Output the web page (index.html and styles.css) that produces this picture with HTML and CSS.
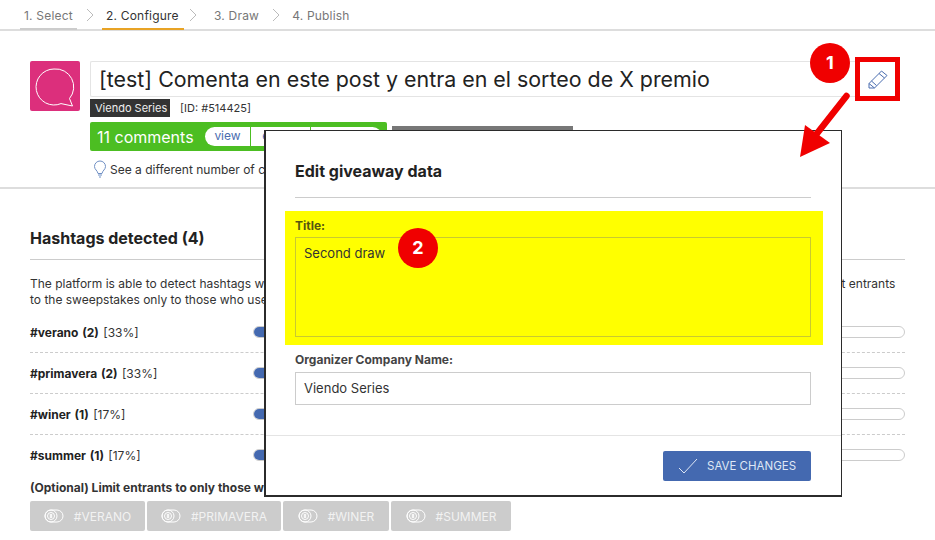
FILE: index.html
```html
<!DOCTYPE html>
<html>
<head>
	<meta charset="utf-8">
	<title>Configure giveaway</title>
	<link rel="stylesheet" href="styles.css">
</head>
<body>
	<nav class="steps">
		<a class="step done">1. Select</a>
		<svg class="chev" width="8" height="14" viewBox="0 0 8 14"><path d="M1 1l6 6-6 6"/></svg>
		<a class="step active">2. Configure</a>
		<svg class="chev c2" width="8" height="14" viewBox="0 0 8 14"><path d="M1 1l6 6-6 6"/></svg>
		<a class="step">3. Draw</a>
		<svg class="chev c3" width="8" height="14" viewBox="0 0 8 14"><path d="M1 1l6 6-6 6"/></svg>
		<a class="step">4. Publish</a>
	</nav>

	<header class="head">
		<div class="logo">
			<svg width="50" height="50" viewBox="0 0 50 50"><path d="M24 8a18 18 0 1 0 7 34.600l11.500 2.400-3-7.500A18 18 0 0 0 24 8z"/></svg>
		</div>
		<div class="head-main">
			<div class="title-row">
				<div class="title-box">[test] Comenta en este post y entra en el sorteo de X premio</div>
				<div class="edit-box">
					<svg width="24" height="24" viewBox="0 0 24 24"><path d="M3 16.500L15.500 4l5.500 4.500L8.500 21H3z M3 16.500l5.500 4.500 M5.500 14l5 4.500 M13 6.500l5.500 4.500"/></svg>
				</div>
			</div>
			<div class="meta"><span class="tag">Viendo Series</span><span class="id">[ID: #514425]</span></div>
			<div class="count-row">
				<div class="count">
					<span class="count-num">11 comments</span>
					<div class="pill"><a class="pill-view">view</a><a class="pill-export">export</a><a>refresh</a></div>
				</div>
				<div class="grey-btn"></div>
			</div>
			<p class="hint">
				<svg width="14" height="18" viewBox="0 0 14 18"><path d="M5 13.500C4.500 10.500 1.500 9.500 1.500 6.500a5.500 5.500 0 0 1 11 0c0 3-3 4-3.500 7z M5 15h4 M6 17h2"/></svg>
				See a different number of comments than on the post?
			</p>
		</div>
	</header>

	<section class="tags">
		<h2>Hashtags detected (4)</h2>
		<p class="intro">The platform is able to detect hashtags within the comments of your post and count these automatically for you. You can use this feature to limit entrants<br>to the sweepstakes only to those who used a specific hashtag.</p>
		<div class="tag-row"><span class="tag-name"><b>#verano (2)</b> [33%]</span><div class="bar"><i style="width: 33%"></i></div></div>
		<div class="tag-row"><span class="tag-name"><b>#primavera (2)</b> [33%]</span><div class="bar"><i style="width: 33%"></i></div></div>
		<div class="tag-row"><span class="tag-name"><b>#winer (1)</b> [17%]</span><div class="bar"><i style="width: 17%"></i></div></div>
		<div class="tag-row last"><span class="tag-name"><b>#summer (1)</b> [17%]</span><div class="bar"><i style="width: 17%"></i></div></div>
		<h4>(Optional) Limit entrants to only those who used these hashtags:</h4>
		<div class="filters">
			<a class="filter f1"><svg width="20" height="14" viewBox="0 0 20 14"><rect x="1" y="1" width="18" height="12" rx="6"/><circle cx="7" cy="7" r="6"/><circle cx="7" cy="7" r="3.500"/><path d="M6.300 5v4M7.700 5v4"/></svg>#VERANO</a>
			<a class="filter f2"><svg width="20" height="14" viewBox="0 0 20 14"><rect x="1" y="1" width="18" height="12" rx="6"/><circle cx="7" cy="7" r="6"/><circle cx="7" cy="7" r="3.500"/><path d="M6.300 5v4M7.700 5v4"/></svg>#PRIMAVERA</a>
			<a class="filter f3"><svg width="20" height="14" viewBox="0 0 20 14"><rect x="1" y="1" width="18" height="12" rx="6"/><circle cx="7" cy="7" r="6"/><circle cx="7" cy="7" r="3.500"/><path d="M6.300 5v4M7.700 5v4"/></svg>#WINER</a>
			<a class="filter f4"><svg width="20" height="14" viewBox="0 0 20 14"><rect x="1" y="1" width="18" height="12" rx="6"/><circle cx="7" cy="7" r="6"/><circle cx="7" cy="7" r="3.500"/><path d="M6.300 5v4M7.700 5v4"/></svg>#SUMMER</a>
		</div>
	</section>

	<div class="modal">
		<div class="modal-body">
			<h3>Edit giveaway data</h3>
			<div class="field hilite">
				<label>Title:</label>
				<div class="textarea"><span>Second draw</span></div>
			</div>
			<div class="field">
				<label>Organizer Company Name:</label>
				<div class="input">Viendo Series</div>
			</div>
		</div>
		<div class="modal-foot">
			<a class="save">
				<svg width="20" height="16" viewBox="0 0 20 16"><path d="M1 10l5 5L19 1"/></svg>
				SAVE CHANGES
			</a>
		</div>
	</div>

	<!-- annotations on top of the screenshot -->
	<div class="badge b1">1</div>
	<div class="badge b2">2</div>
	<svg class="arrow" width="60" height="72" viewBox="0 0 60 72">
		<path class="shaft" d="M46.500 6L15 46"/>
		<path class="head-tip" d="M0 67L5 35 30 53z"/>
	</svg>
</body>
</html>
```

FILE: styles.css
```css
html{height: 100%; background: #fff;}
body{margin: 0; height: 540px; overflow: hidden; position: relative; font-family: Inter, "Liberation Sans", sans-serif; font-size: 12px; color: #333;}
a{display: block;}

/* steps */
.steps{display: flex; align-items: center; height: 29px; padding-left: 20px; border-bottom: 2px solid #ddd; color: #777;}
.step{height: 27px; line-height: 29px; padding: 0 4px; border-bottom: 2px solid transparent; font-size: 12px; letter-spacing: .2px; margin-bottom: -2px;}
.step.done{border-bottom-color: #ccc; width: 49px;}
.step.active{border-bottom-color: #e8a325; color: #333; width: 74px;}
.chev{fill: none; stroke: #bbb; stroke-width: 1; margin: 0 8px 0 9px;}
.chev.c2{margin: 0 13px 0 5px;}
.chev.c3{margin: 0 8px 0 9px;}

/* header */
.head{display: flex; gap: 10px; padding: 30px 35px 0 30px; height: 158px; box-sizing: border-box; border-bottom: 2px solid #ddd;}
.logo{flex: none; width: 50px; height: 50px; background: #dc2f7c; border-radius: 2px;}
.logo svg{display: block; fill: none; stroke: #fff; stroke-width: 1;}
.head-main{flex: 1; min-width: 0;}
.title-row{display: flex; align-items: flex-start;}
.title-box{flex: 1; height: 36px; line-height: 35px; padding-left: 8px; box-sizing: border-box; border: 1px solid #e4e4e4; border-width: 1px 0 1px 1px; border-radius: 2px 0 0 2px; font-size: 21.400px; color: #222; white-space: nowrap;}
.edit-box{flex: none; width: 45px; height: 44px; margin: -4px 0 -8px 0; box-sizing: border-box; border: 5px solid #f00000; background: #fff; display: flex; align-items: center; justify-content: center;}
.edit-box svg{fill: none; stroke: #4a6db0; stroke-width: 1;}
.meta{display: flex; align-items: center; margin-top: 2px; height: 18px;}
.tag{background: #333; color: #eee; font-size: 11px; line-height: 18px; padding: 0 5px; width: 70px; white-space: nowrap;}
.id{margin-left: 10px; font-size: 11px; color: #333;}
.count-row{display: flex; align-items: flex-start; gap: 5px; margin-top: 5px;}
.count{display: flex; align-items: center; width: 297px; height: 29px; box-sizing: border-box; padding: 0 5px 0 7px; background: #4cbe22; border-radius: 2px; color: #fff;}
.count-num{font-size: 16px; width: 108px; white-space: nowrap;}
.pill{display: flex; flex: 1; height: 19px; line-height: 18px; background: #fff; border-radius: 10px; font-size: 12px; color: #4a6db0; overflow: hidden;}
.pill a{flex: 1; text-align: center; border-left: 1px solid #4cbe22;}
.pill .pill-view{flex: none; width: 45px; border-left: 0;}
.pill .pill-export{flex: none; width: 59px;}
.grey-btn{width: 181px; height: 29px; margin-top: 4px; background: #777;}
.hint{display: flex; align-items: center; gap: 3px; margin: 5px 0 0 3px; font-size: 12px; color: #333;}
.hint svg{fill: none; stroke: #6f8fc4; stroke-width: 1;}

/* hashtags */
.tags{padding: 0 30px;}
.tags h2{margin: 39px 0 0; height: 31px; line-height: 20px; border-bottom: 1px solid #ccc; font-size: 16px; font-weight: 700; color: #222;}
.intro{margin: 16px 0 4px; font-size: 12px; line-height: 16px; color: #333; white-space: nowrap;}
.tag-row{display: flex; align-items: center; height: 40px; border-bottom: 1px dashed #ccc;}
.tag-row.last{border-bottom: 0;}
.tag-row b{color: #222; font-weight: 700;}
.tag-name{flex: none; width: 223px; font-size: 12px; word-spacing: 1px;}
.bar{flex: 1; height: 12px; box-sizing: border-box; border: 1px solid #ccc; border-radius: 6px; background: #fff;}
.bar i{display: block; height: 10px; background: #4469b0; border-radius: 6px;}
.tags h4{margin: 5px 0 0; font-size: 12px; font-weight: 700; line-height: 16px; color: #333;}
.filters{display: flex; gap: 2px; margin-top: 5px;}
.filter{display: flex; align-items: center; justify-content: center; gap: 10px; height: 30px; background: #ccc; border-radius: 2px; font-size: 12px; color: #f2f2f2;}
.filter svg{fill: none; stroke: #fff; stroke-width: 1;}
.f1{width: 115px;}
.f2{width: 134px;}
.f3{width: 106px;}
.f4{width: 120px;}

/* modal */
.modal{position: absolute; left: 264px; top: 130px; width: 578px; height: 367px; box-sizing: border-box; background: #fff; border: 2px solid #2b2b2b; border-width: 1px 1px 2px 2px; display: flex; flex-direction: column;}
.modal-body{flex: 1; padding: 0 30px 0 29px;}
.modal h3{margin: 0 0 13px; height: 66px; line-height: 80px; border-bottom: 1px solid #ccc; font-size: 16px; font-weight: 700; color: #222;}
.field label{display: block; font-size: 12px; font-weight: 700; line-height: 16px; color: #444;}
.hilite{margin: 0 -12px 0 -10px; padding: 7px 12px 8px 10px; background: #ffff00;}
.hilite label{color: #555510;}
.textarea{height: 100px; margin-top: 3px; padding: 7px 8px; box-sizing: border-box; border: 1px solid #c9c930; font-size: 13px; line-height: 16px; color: #333;}
.field + .field{margin-top: 7px;}
.input{height: 33px; margin-top: 4px; padding: 0 8px; box-sizing: border-box; border: 1px solid #ccc; font-size: 13px; line-height: 31px; color: #333;}
.modal-foot{display: flex; justify-content: flex-end; flex: none; height: 60px; padding: 15px 30px 0 0; box-sizing: border-box; border-top: 1px solid #e4e4e4;}
.save{display: flex; align-items: center; gap: 9px; width: 148px; height: 30px; padding-left: 15px; box-sizing: border-box; background: #4469b0; border-radius: 2px; font-size: 11.500px; color: #dfe7f5; white-space: nowrap;}
.save svg{fill: none; stroke: #dfe7f5; stroke-width: 1;}

/* annotations */
.badge{position: absolute; width: 40px; height: 40px; border-radius: 50%; background: #f00000; color: #fff; font-size: 18px; font-weight: 700; line-height: 40px; text-align: center;}
.b1{left: 810px; top: 43px;}
.b2{left: 398px; top: 228px;}
.arrow{position: absolute; left: 800px; top: 90px;}
.shaft{fill: none; stroke: #f00000; stroke-width: 6.500; stroke-linecap: round;}
.head-tip{fill: #f00000;}
```
